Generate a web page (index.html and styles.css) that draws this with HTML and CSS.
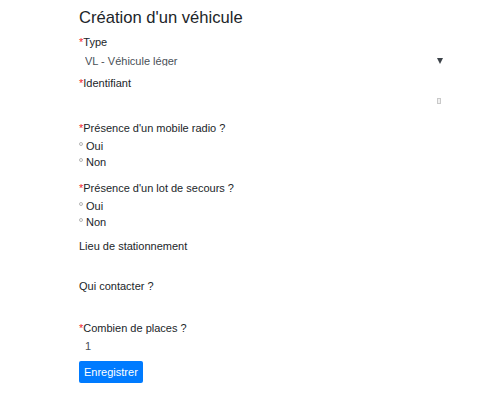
FILE: index.html
```html
<!DOCTYPE html>
<html lang="fr">
<head>
<meta charset="utf-8">
<title>Création d'un véhicule</title>
<link rel="stylesheet" href="styles.css">
</head>
<body>
<form class="form">
  <h1 class="title">Création d'un véhicule</h1>

  <div class="field field-type">
    <div class="label"><span class="req">*</span>Type</div>
    <div class="select"><span class="select-value">VL - Véhicule léger</span><span class="arrow"></span></div>
  </div>

  <div class="field">
    <div class="label"><span class="req">*</span>Identifiant</div>
    <div class="input input-id"><span class="kicon"></span></div>
  </div>

  <div class="field field-radio">
    <div class="label"><span class="req">*</span>Présence d'un mobile radio ?</div>
    <div class="options">
      <div class="option"><span class="dot"></span>Oui</div>
      <div class="option"><span class="dot"></span>Non</div>
    </div>
  </div>

  <div class="field field-radio2">
    <div class="label"><span class="req">*</span>Présence d'un lot de secours ?</div>
    <div class="options">
      <div class="option"><span class="dot"></span>Oui</div>
      <div class="option"><span class="dot"></span>Non</div>
    </div>
  </div>

  <div class="field field-lieu">
    <div class="label">Lieu de stationnement</div>
    <div class="input input-lieu"></div>
  </div>

  <div class="field">
    <div class="label">Qui contacter ?</div>
    <div class="input input-qui"></div>
  </div>

  <div class="field">
    <div class="label"><span class="req">*</span>Combien de places ?</div>
    <div class="input input-num"><span class="value">1</span></div>
  </div>

  <button type="button" class="btn">Enregistrer</button>
</form>
</body>
</html>
```

FILE: styles.css
```css
html, body {
  margin: 0;
  padding: 0;
  background: #ffffff;
}

body {
  font-family: "Liberation Sans", Arial, sans-serif;
  font-size: 11px;
  line-height: 16.5px;
  color: #212529;
}

.form {
  width: 365px;
  margin: 0 0 0 79px;
  padding-top: 8px;
}

.title {
  margin: 0;
  font-size: 16.6px;
  line-height: 20px;
  font-weight: 400;
  color: #212529;
}

.field-type {
  margin-top: 6px;
}

.label {
  height: 16.5px;
}

.req {
  color: #f0262c;
}

.select {
  height: 24px;
  display: flex;
  align-items: center;
  justify-content: space-between;
  padding: 0 1px 0 6px;
  color: #495057;
}

.select-value {
  align-self: flex-start;
  display: block;
  height: 13px;
  margin-top: 2.5px;
  overflow: hidden;
}

.arrow {
  width: 0;
  height: 0;
  border-left: 3px solid transparent;
  border-right: 3px solid transparent;
  border-top: 6px solid #3d4349;
  margin-top: -3px;
}

.input {
  display: flex;
  align-items: center;
  padding: 0 6px;
  color: #495057;
}

.input-id {
  height: 20px;
  justify-content: flex-end;
  padding-right: 3px;
  margin-bottom: 9px;
}

.kicon {
  width: 2px;
  height: 4px;
  border: 1px solid #c9c9c9;
  background: #f1f1f1;
}

.options {
  margin-top: 1px;
}

.option {
  display: flex;
  align-items: flex-start;
  height: 16.5px;
}

.dot {
  width: 2px;
  height: 2px;
  border: 1px solid #b5b5b5;
  border-radius: 50%;
  margin: 4px 3px 0 0;
}

.field-radio {
  margin-bottom: 9.5px;
}

.field-lieu {
  margin-top: 7px;
}

.input-lieu {
  height: 23.5px;
}

.input-qui {
  height: 26px;
}

.input-num {
  height: 20px;
}

.btn {
  display: block;
  margin-top: 4.5px;
  height: 22px;
  padding: 0 5px;
  border: 0;
  border-radius: 2px;
  background: #007bff;
  color: #ffffff;
  font-family: "Liberation Sans", Arial, sans-serif;
  font-size: 11px;
  line-height: 16.5px;
}
```
